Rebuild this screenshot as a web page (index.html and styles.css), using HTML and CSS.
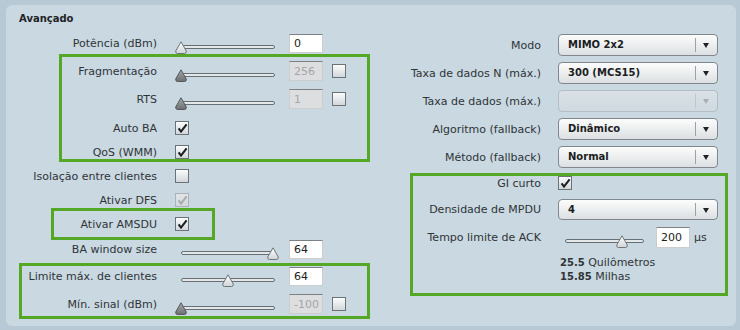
FILE: index.html
```html
<!DOCTYPE html>
<html>
	<head>
		<meta charset="UTF-8">
		<title>Avançado</title>
		<link rel="stylesheet" href="styles.css">
	</head>
	<body>
		<svg class="defs" width="0" height="0">
			<defs>
				<linearGradient id="thumbOn" x1="0" y1="0" x2="0" y2="1">
					<stop offset="0" stop-color="#ffffff"/>
					<stop offset="1" stop-color="#cfd4d7"/>
				</linearGradient>
				<linearGradient id="thumbOff" x1="0" y1="0" x2="0" y2="1">
					<stop offset="0" stop-color="#a7a9ab"/>
					<stop offset="1" stop-color="#6c6f71"/>
				</linearGradient>
				<path id="thumbShape" d="M6 0.8 L11.3 10 Q11.6 12.5 9.5 12.5 H2.5 Q0.4 12.5 0.7 10 Z"/>
				<path id="tick" d="M2.6 6.4 L5 9.6 L10.6 2.4"/>
			</defs>
		</svg>

		<div class="panel">
			<div class="title">Avançado</div>
			<div class="cols">
				<!-- coluna esquerda -->
				<div class="col-left">
					<div class="row">
						<span class="lbl">Potência (dBm)</span>
						<div class="slider"><span class="track"></span><svg class="thumb" style="left:0px" width="12" height="13"><use href="#thumbShape" fill="url(#thumbOn)" stroke="#6f767a"/></svg></div>
						<input class="num" type="text" value="0">
					</div>
					<div class="hl hl-a">
						<div class="row">
							<span class="lbl">Fragmentação</span>
							<div class="slider"><span class="track"></span><svg class="thumb" style="left:0px" width="12" height="13"><use href="#thumbShape" fill="url(#thumbOff)" stroke="#55595c"/></svg></div>
							<input class="num off" type="text" value="256" disabled>
							<span class="chk"></span>
						</div>
						<div class="row">
							<span class="lbl">RTS</span>
							<div class="slider"><span class="track"></span><svg class="thumb" style="left:0px" width="12" height="13"><use href="#thumbShape" fill="url(#thumbOff)" stroke="#55595c"/></svg></div>
							<input class="num off" type="text" value="1" disabled>
							<span class="chk"></span>
						</div>
						<div class="row row-chk row-first">
							<span class="lbl">Auto BA</span>
							<span class="chk"><svg width="12" height="12"><use href="#tick"/></svg></span>
						</div>
						<div class="row row-chk">
							<span class="lbl">QoS (WMM)</span>
							<span class="chk"><svg width="12" height="12"><use href="#tick"/></svg></span>
						</div>
					</div>
					<div class="row row-chk">
						<span class="lbl">Isolação entre clientes</span>
						<span class="chk"></span>
					</div>
					<div class="row row-chk">
						<span class="lbl">Ativar DFS</span>
						<span class="chk dis"><svg width="12" height="12"><use href="#tick"/></svg></span>
					</div>
					<div class="hl hl-b">
						<div class="row row-chk">
							<span class="lbl">Ativar AMSDU</span>
							<span class="chk"><svg width="12" height="12"><use href="#tick"/></svg></span>
						</div>
					</div>
					<div class="row row-ba">
						<span class="lbl">BA window size</span>
						<div class="slider"><span class="track"></span><svg class="thumb" style="left:92px" width="12" height="13"><use href="#thumbShape" fill="url(#thumbOn)" stroke="#6f767a"/></svg></div>
						<input class="num" type="text" value="64">
					</div>
					<div class="hl hl-c">
						<div class="row">
							<span class="lbl">Limite máx. de clientes</span>
							<div class="slider"><span class="track"></span><svg class="thumb" style="left:47px" width="12" height="13"><use href="#thumbShape" fill="url(#thumbOn)" stroke="#6f767a"/></svg></div>
							<input class="num" type="text" value="64">
						</div>
						<div class="row">
							<span class="lbl">Mín. sinal (dBm)</span>
							<div class="slider"><span class="track"></span><svg class="thumb" style="left:0px" width="12" height="13"><use href="#thumbShape" fill="url(#thumbOff)" stroke="#55595c"/></svg></div>
							<input class="num off" type="text" value="-100" disabled>
							<span class="chk"></span>
						</div>
					</div>
				</div>

				<!-- coluna direita -->
				<div class="col-right">
					<div class="row">
						<span class="lbl">Modo</span>
						<div class="select">MIMO 2x2</div>
					</div>
					<div class="row">
						<span class="lbl">Taxa de dados N (máx.)</span>
						<div class="select">300 (MCS15)</div>
					</div>
					<div class="row">
						<span class="lbl">Taxa de dados (máx.)</span>
						<div class="select off"></div>
					</div>
					<div class="row">
						<span class="lbl">Algoritmo (fallback)</span>
						<div class="select">Dinâmico</div>
					</div>
					<div class="row">
						<span class="lbl">Método (fallback)</span>
						<div class="select">Normal</div>
					</div>
					<div class="hl hl-d">
						<div class="row row-chk">
							<span class="lbl">GI curto</span>
							<span class="chk"><svg width="12" height="12"><use href="#tick"/></svg></span>
						</div>
						<div class="row">
							<span class="lbl">Densidade de MPDU</span>
							<div class="select short">4</div>
						</div>
						<div class="row">
							<span class="lbl">Tempo limite de ACK</span>
							<div class="slider slider-ack"><span class="track"></span><svg class="thumb" style="left:58px" width="12" height="13"><use href="#thumbShape" fill="url(#thumbOn)" stroke="#6f767a"/></svg></div>
							<input class="num num-ack" type="text" value="200">
							<span class="unit">µs</span>
						</div>
						<div class="dist">
							<div><b>25.5</b> Quilômetros</div>
							<div><b>15.85</b> Milhas</div>
						</div>
					</div>
				</div>
			</div>
		</div>
	</body>
</html>
```

FILE: styles.css
```css
*{
	padding: 0;
	margin: 0;
	box-sizing: border-box;
}
body{
	background-color: #b6c9d5;
	font-family: "DejaVu Sans", Verdana, sans-serif;
	font-size: 11px;
	color: #2f3437;
}
.defs{
	position: absolute;
}
.panel{
	height: 321px;
	margin: 5px 4px 0 6px;
	padding-top: 7px;
	background-color: #c9d8e1;
	border-radius: 6px;
}
.title{
	height: 14px;
	line-height: 14px;
	padding-left: 13px;
	font-size: 10px;
	font-weight: bold;
	color: #1f2326;
}
.cols{
	display: flex;
}
.col-left{
	width: 374px;
	padding-top: 3px;
}
.col-right{
	flex: 1;
	padding-top: 5px;
}
.row{
	display: flex;
	align-items: center;
	height: 28px;
}
.row-chk{
	height: 24px;
}
.row-first{
	margin-top: 3px;
}
.row-ba{
	height: 26px;
}
.lbl{
	width: 151px;
	margin-right: 18px;
	text-align: right;
	white-space: nowrap;
}
.col-right .lbl{
	width: 161px;
	margin-right: 17px;
}

/* slider */
.slider{
	position: relative;
	width: 100px;
	height: 13px;
	margin-top: 8px;
	margin-right: 14px;
}
.track{
	position: absolute;
	left: 6px;
	right: 0;
	top: 4px;
	height: 4px;
	border: 1px solid #667074;
	border-radius: 2px;
	background-color: #e3e7e9;
}
.thumb{
	position: absolute;
	top: 0;
	display: block;
	overflow: visible;
}
.slider-ack{
	width: 86px;
	margin-right: 12px;
}
.slider-ack .track{
	left: 7px;
}

/* campos */
.num{
	width: 34px;
	height: 19px;
	padding-left: 4px;
	border: 1px solid #cbcdce;
	border-top-color: #7c8184;
	background-color: #fff;
	font-family: "DejaVu Sans", Verdana, sans-serif;
	font-size: 11px;
	color: #1c1c1c;
	outline: none;
}
.num.off{
	height: 20px;
	background-color: #dcdedf;
	color: #a3a6a8;
}
.num-ack{
	height: 21px;
}
.unit{
	margin-left: 4px;
}
.chk{
	display: flex;
	align-items: center;
	justify-content: center;
	width: 14px;
	height: 14px;
	border: 1px solid #6c7377;
	background: linear-gradient(#fbfcfc, #d2d7da);
}
.num + .chk{
	margin-left: 9px;
}
.chk svg{
	fill: none;
	stroke: #1d1f20;
	stroke-width: 2.1;
}
.chk.dis{
	border-color: #aab2b7;
	background: linear-gradient(#e1e5e7, #d2d8db);
}
.chk.dis svg{
	stroke: #a6adb1;
}

/* select */
.select{
	position: relative;
	width: 160px;
	height: 22px;
	padding-left: 9px;
	line-height: 20px;
	border: 1px solid #80888d;
	border-radius: 4px;
	background: linear-gradient(#fcfcfc, #dce0e2);
	font-size: 10px;
	font-weight: bold;
	color: #1b1d1e;
}
.select::before{
	content: "";
	position: absolute;
	right: 21px;
	top: 3px;
	bottom: 3px;
	width: 1px;
	background-color: #9ba2a6;
}
.select::after{
	content: "";
	position: absolute;
	right: 8px;
	top: 8px;
	border-left: 3.5px solid transparent;
	border-right: 3.5px solid transparent;
	border-top: 5px solid #222;
}
.select.off{
	border-color: #b3bdc3;
	background: linear-gradient(#d9e1e6, #cfd9df);
}
.select.off::before{
	background-color: #bec7cc;
}
.select.off::after{
	border-top-color: #a7afb4;
}
.select.short{
	height: 21px;
	line-height: 19px;
}

.dist{
	margin-top: 5px;
	padding-left: 180px;
	line-height: 14px;
}
.dist b{
	font-size: 10px;
}

/* destaques verdes */
.hl{
	position: relative;
}
.hl::after{
	content: "";
	position: absolute;
	border: 3px solid #55a825;
	pointer-events: none;
}
.hl-a::after{
	left: 53px;
	right: 10px;
	top: -3px;
	bottom: 2px;
}
.hl-b::after{
	left: 45px;
	right: 165px;
	top: -4px;
	bottom: -4px;
}
.hl-c::after{
	left: 13px;
	right: 10px;
	top: 1px;
	bottom: -1px;
}
.hl-d::after{
	left: 30px;
	right: 8px;
	top: 2px;
	bottom: -12px;
}
```
